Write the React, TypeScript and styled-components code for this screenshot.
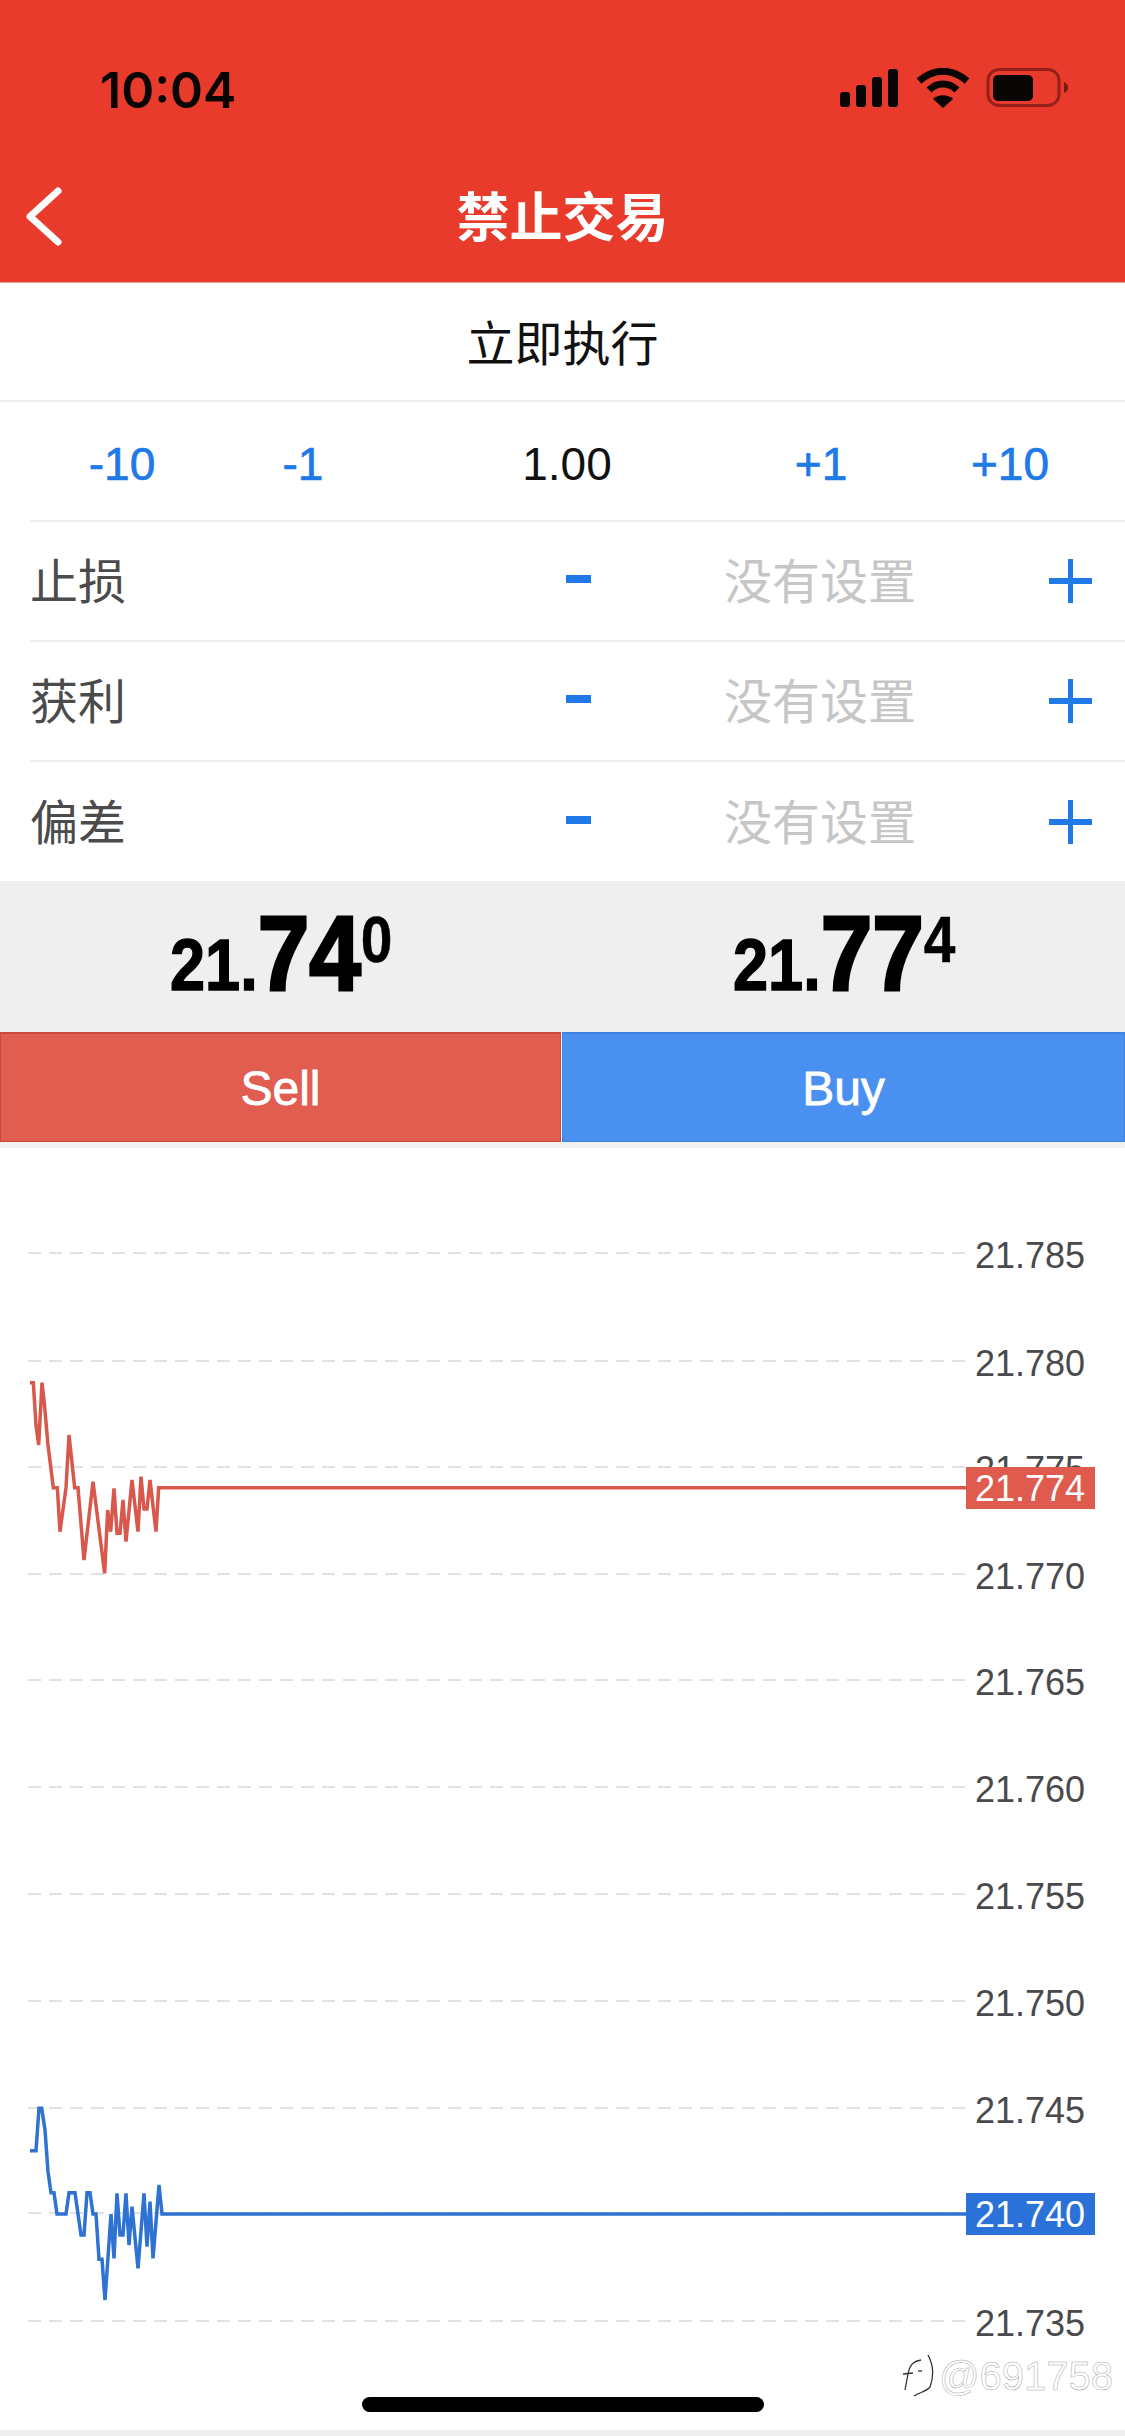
import React from "react";
import styled, { createGlobalStyle } from "styled-components";

const GlobalStyle = createGlobalStyle`
  html, body {
    margin: 0;
    padding: 0;
    background: #ffffff;
  }
  * {
    box-sizing: border-box;
  }
`;

const CJK = `"Noto Sans CJK SC", "Noto Sans", sans-serif`;
const LATIN = `"Liberation Sans", "Noto Sans CJK SC", sans-serif`;
const BLUE = "#1f7ae8";

const Screen = styled.div`
  width: 1125px;
  height: 2436px;
  display: flex;
  flex-direction: column;
  background: #ffffff;
  overflow: hidden;
`;

const Header = styled.header`
  height: 283px;
  background: #e93b2b;
  border-bottom: 1px solid #e8a29b;
  display: flex;
  flex-direction: column;
`;

const StatusBar = styled.div`
  height: 178px;
  padding: 60px 55px 0 100px;
  display: flex;
  justify-content: space-between;
  align-items: flex-start;
`;

const Time = styled.span`
  font-family: Inter, sans-serif;
  font-size: 50px;
  font-weight: 600;
  line-height: 60px;
  color: #0a0505;
`;

const StatusIcons = styled.div`
  display: flex;
  align-items: center;
  gap: 16px;
  margin-top: 8px;
`;

const NavBar = styled.div`
  flex: 1;
  display: grid;
  grid-template-columns: 120px 1fr 120px;
  align-items: start;
`;

const BackIcon = styled.svg`
  width: 80px;
  height: 70px;
  margin-top: 4px;
`;

const Title = styled.h1`
  margin: 0;
  text-align: center;
  font-family: ${CJK};
  font-size: 53px;
  font-weight: 700;
  line-height: 72px;
  color: #ffffff;
`;

const ModeRow = styled.div`
  height: 119px;
  padding-bottom: 3px;
  border-bottom: 2px solid #eeeeee;
  display: flex;
  align-items: center;
  justify-content: center;
  font-family: ${CJK};
  font-size: 48px;
  color: #111111;
`;

const QtyRow = styled.div`
  height: 120px;
  margin-left: 30px;
  padding-top: 6px;
  border-bottom: 2px solid #eeeeee;
  display: grid;
  grid-template-columns: 184px 178px 350px 158px 220px;
  align-items: center;
  justify-items: center;
  font-family: ${LATIN};
  font-size: 46px;
`;

const Step = styled.span<{ $value?: boolean }>`
  color: ${({ $value }) => ($value ? "#111111" : BLUE)};
  -webkit-text-stroke: ${({ $value }) => ($value ? "0" : `0.7px ${BLUE}`)};
`;

const StopRow = styled.div<{ $last?: boolean }>`
  height: ${({ $last }) => ($last ? "119px" : "120px")};
  margin-left: 30px;
  padding: 0 5px 0 0;
  border-bottom: ${({ $last }) => ($last ? "none" : "2px solid #eeeeee")};
  display: grid;
  grid-template-columns: 1fr 84px 400px 100px;
  align-items: center;
  justify-items: center;
  font-family: ${CJK};
  font-size: 48px;
`;

const StopLabel = styled.span`
  justify-self: start;
  color: #4b4b4b;
  margin-bottom: 6px;
`;

const StopValue = styled.span`
  color: #c6c6c6;
  margin-bottom: 6px;
`;

const Minus = styled.span`
  width: 25px;
  height: 8px;
  margin-bottom: 4px;
  background: ${BLUE};
`;

const Plus = styled.span`
  width: 43px;
  height: 44px;
  background:
    linear-gradient(${BLUE}, ${BLUE}) center / 43px 6px no-repeat,
    linear-gradient(${BLUE}, ${BLUE}) center / 5px 44px no-repeat;
`;

const PriceBand = styled.div`
  height: 151px;
  background: #efeff0;
  display: grid;
  grid-template-columns: 1fr 1fr;
`;

const Price = styled.div`
  font-family: "Liberation Sans", sans-serif;
  font-weight: 700;
  color: #000000;
  text-align: center;
  white-space: nowrap;
  line-height: 145px;
  transform: scaleX(0.875);
`;

const PriceSmall = styled.span`
  font-size: 72px;
  -webkit-text-stroke: 1.5px #000000;
`;

const PriceBig = styled.span`
  font-size: 106px;
  -webkit-text-stroke: 3px #000000;
`;

const PriceSup = styled.span`
  font-size: 65px;
  vertical-align: 28px;
  line-height: 0;
  -webkit-text-stroke: 0.5px #000000;
`;

const TradeRow = styled.div`
  display: grid;
  grid-template-columns: 561px 1fr;
  column-gap: 1px;
  height: 110px;
`;

const TradeButton = styled.button<{ $buy?: boolean }>`
  appearance: none;
  margin: 0;
  padding: 2px 0 0;
  font-family: "Liberation Sans", sans-serif;
  font-size: 48px;
  color: #ffffff;
  -webkit-text-stroke: 0.8px #ffffff;
  background: ${({ $buy }) => ($buy ? "#4a90f0" : "#e05d50")};
  border: 1px solid ${({ $buy }) => ($buy ? "#3f82e0" : "#c9473d")};
  border-top-width: 2px;
`;

const Divider = styled.div`
  height: 6px;
  background: #f1f1f2;
`;

const ChartArea = styled.section`
  position: relative;
  flex: 1;
`;

const ChartSvg = styled.svg`
  display: block;
  width: 1125px;
  height: 1282px;
  font-family: "Liberation Sans", sans-serif;
`;

const HomeIndicator = styled.div`
  position: absolute;
  left: 362px;
  bottom: 18px;
  width: 402px;
  height: 15px;
  border-radius: 8px;
  background: #000000;
`;

const Watermark = styled.div`
  position: absolute;
  right: 12px;
  bottom: 30px;
  display: flex;
  align-items: center;
  gap: 3px;
  font-family: "Liberation Sans", sans-serif;
  font-size: 40px;
  line-height: 48px;
  color: #ffffff;
  -webkit-text-stroke: 0.5px #a8a8a8;
`;

const BottomBar = styled.div`
  height: 6px;
  background: #efeff0;
`;

const GRID = [
  { y: 1253, label: "21.785" },
  { y: 1361, label: "21.780" },
  { y: 1467, label: "21.775" },
  { y: 1574, label: "21.770" },
  { y: 1680, label: "21.765" },
  { y: 1787, label: "21.760" },
  { y: 1894, label: "21.755" },
  { y: 2001, label: "21.750" },
  { y: 2108, label: "21.745" },
  { y: 2321, label: "21.735" },
];

// traced from a 3x crop, base is the crop's top edge
const scale = (pts: number[][], base: number) =>
  pts.map(([x, y]) => `${x / 3},${base + y / 3}`).join(" ");

const ASK = scale(
  [
    [90, 68], [100, 68], [108, 195], [116, 255], [126, 68], [133, 130], [144, 255],
    [160, 383], [172, 383], [180, 515], [198, 383], [207, 225], [224, 383], [234, 383],
    [252, 600], [279, 365], [314, 640], [323, 450], [332, 515], [342, 385], [351, 520],
    [360, 520], [369, 420], [378, 545], [396, 360], [414, 515], [423, 350], [432, 447],
    [441, 447], [450, 360], [468, 515], [476, 383], [2898, 383],
  ],
  1360,
);

const BID = scale(
  [
    [90, 212], [108, 212], [117, 85], [125, 85], [135, 150], [144, 275], [153, 338],
    [162, 338], [171, 402], [198, 402], [207, 338], [225, 338], [243, 465], [252, 465],
    [261, 338], [270, 338], [279, 402], [288, 402], [297, 538], [306, 538], [315, 660],
    [333, 402], [342, 535], [351, 340], [360, 465], [369, 465], [378, 340], [387, 495],
    [396, 380], [414, 565], [432, 340], [441, 500], [450, 365], [459, 535], [477, 315],
    [486, 402], [2898, 402],
  ],
  2080,
);

const SignalIcon = () => (
  <svg width="62" height="40" viewBox="0 0 62 40">
    <rect x="2" y="24" width="10" height="15" rx="3" fill="#0a0505" />
    <rect x="18" y="17" width="10" height="22" rx="3" fill="#0a0505" />
    <rect x="34" y="9" width="10" height="30" rx="3" fill="#0a0505" />
    <rect x="50" y="1" width="10" height="38" rx="3" fill="#0a0505" />
  </svg>
);

const WifiIcon = () => (
  <svg width="54" height="40" viewBox="0 0 54 40">
    <path d="M3 13 C18 0 36 0 51 13" fill="none" stroke="#0a0505" strokeWidth="7" />
    <path d="M13 22 C21 14 33 14 41 22" fill="none" stroke="#0a0505" strokeWidth="7" />
    <path d="M17 31 C22 26 32 26 37 31 L27 40 Z" fill="#0a0505" />
  </svg>
);

const BatteryIcon = () => (
  <svg width="84" height="40" viewBox="0 0 84 40">
    <rect x="2" y="1.5" width="71" height="36" rx="11" fill="none" stroke="#96201a" strokeWidth="3" />
    <rect x="7" y="7" width="40" height="26" rx="5" fill="#0a0505" />
    <path d="M78 14 C81 15 82 17 82 19.5 C82 22 81 24 78 25 Z" fill="#7a1a12" />
  </svg>
);

const LogoMark = () => (
  <svg width="34" height="44" viewBox="0 0 34 44" fill="none" stroke="#333333" strokeWidth="1.3">
    <path d="M19 6 C13 7 8 9 6 20 L3 36" />
    <path d="M1 20 L11 19" />
    <path d="M16 17 L20 17" />
    <path d="M26 1 C32 12 32 22 28 33 C24 38 18 38 12 42" />
  </svg>
);

export default function App() {
  return (
    <Screen>
      <GlobalStyle />
      <Header>
        <StatusBar>
          <Time>10:04</Time>
          <StatusIcons>
            <SignalIcon />
            <WifiIcon />
            <BatteryIcon />
          </StatusIcons>
        </StatusBar>
        <NavBar>
          <BackIcon viewBox="0 0 80 70">
            <path
              d="M58 9 L30 34.5 L58 60"
              fill="none"
              stroke="#ffffff"
              strokeWidth="7"
              strokeLinecap="round"
              strokeLinejoin="round"
            />
          </BackIcon>
          <Title>禁止交易</Title>
        </NavBar>
      </Header>

      <ModeRow>立即执行</ModeRow>

      <QtyRow>
        <Step>-10</Step>
        <Step>-1</Step>
        <Step $value>1.00</Step>
        <Step>+1</Step>
        <Step>+10</Step>
      </QtyRow>

      <StopRow>
        <StopLabel>止损</StopLabel>
        <Minus />
        <StopValue>没有设置</StopValue>
        <Plus />
      </StopRow>
      <StopRow>
        <StopLabel>获利</StopLabel>
        <Minus />
        <StopValue>没有设置</StopValue>
        <Plus />
      </StopRow>
      <StopRow $last>
        <StopLabel>偏差</StopLabel>
        <Minus />
        <StopValue>没有设置</StopValue>
        <Plus />
      </StopRow>

      <PriceBand>
        <Price>
          <PriceSmall>21.</PriceSmall>
          <PriceBig>74</PriceBig>
          <PriceSup>0</PriceSup>
        </Price>
        <Price>
          <PriceSmall>21.</PriceSmall>
          <PriceBig>77</PriceBig>
          <PriceSup>4</PriceSup>
        </Price>
      </PriceBand>

      <TradeRow>
        <TradeButton>Sell</TradeButton>
        <TradeButton $buy>Buy</TradeButton>
      </TradeRow>
      <Divider />

      <ChartArea>
        <ChartSvg viewBox="0 1148 1125 1282">
          {GRID.map((g) => (
            <g key={g.label}>
              <line x1="28" x2="966" y1={g.y} y2={g.y} stroke="#c4c4c4" strokeWidth="1" strokeDasharray="13 8" />
              <text x="975" y={g.y + 15} fontSize="36" fill="#4a4a4c">
                {g.label}
              </text>
            </g>
          ))}
          <line x1="28" x2="966" y1="2213" y2="2213" stroke="#c4c4c4" strokeWidth="1" strokeDasharray="13 8" />

          <polyline points={ASK} fill="none" stroke="#d9584c" strokeWidth="3.5" />
          <rect x="966" y="1467" width="129" height="42" fill="#df5b4e" />
          <text x="975" y="1501" fontSize="36" fill="#ffffff">
            21.774
          </text>

          <polyline points={BID} fill="none" stroke="#2e72d2" strokeWidth="3.5" />
          <rect x="966" y="2193" width="129" height="42" fill="#2a72d8" />
          <text x="975" y="2227" fontSize="36" fill="#ffffff">
            21.740
          </text>
        </ChartSvg>
        <Watermark>
          <LogoMark />
          <span>@691758</span>
        </Watermark>
        <HomeIndicator />
      </ChartArea>
      <BottomBar />
    </Screen>
  );
}
